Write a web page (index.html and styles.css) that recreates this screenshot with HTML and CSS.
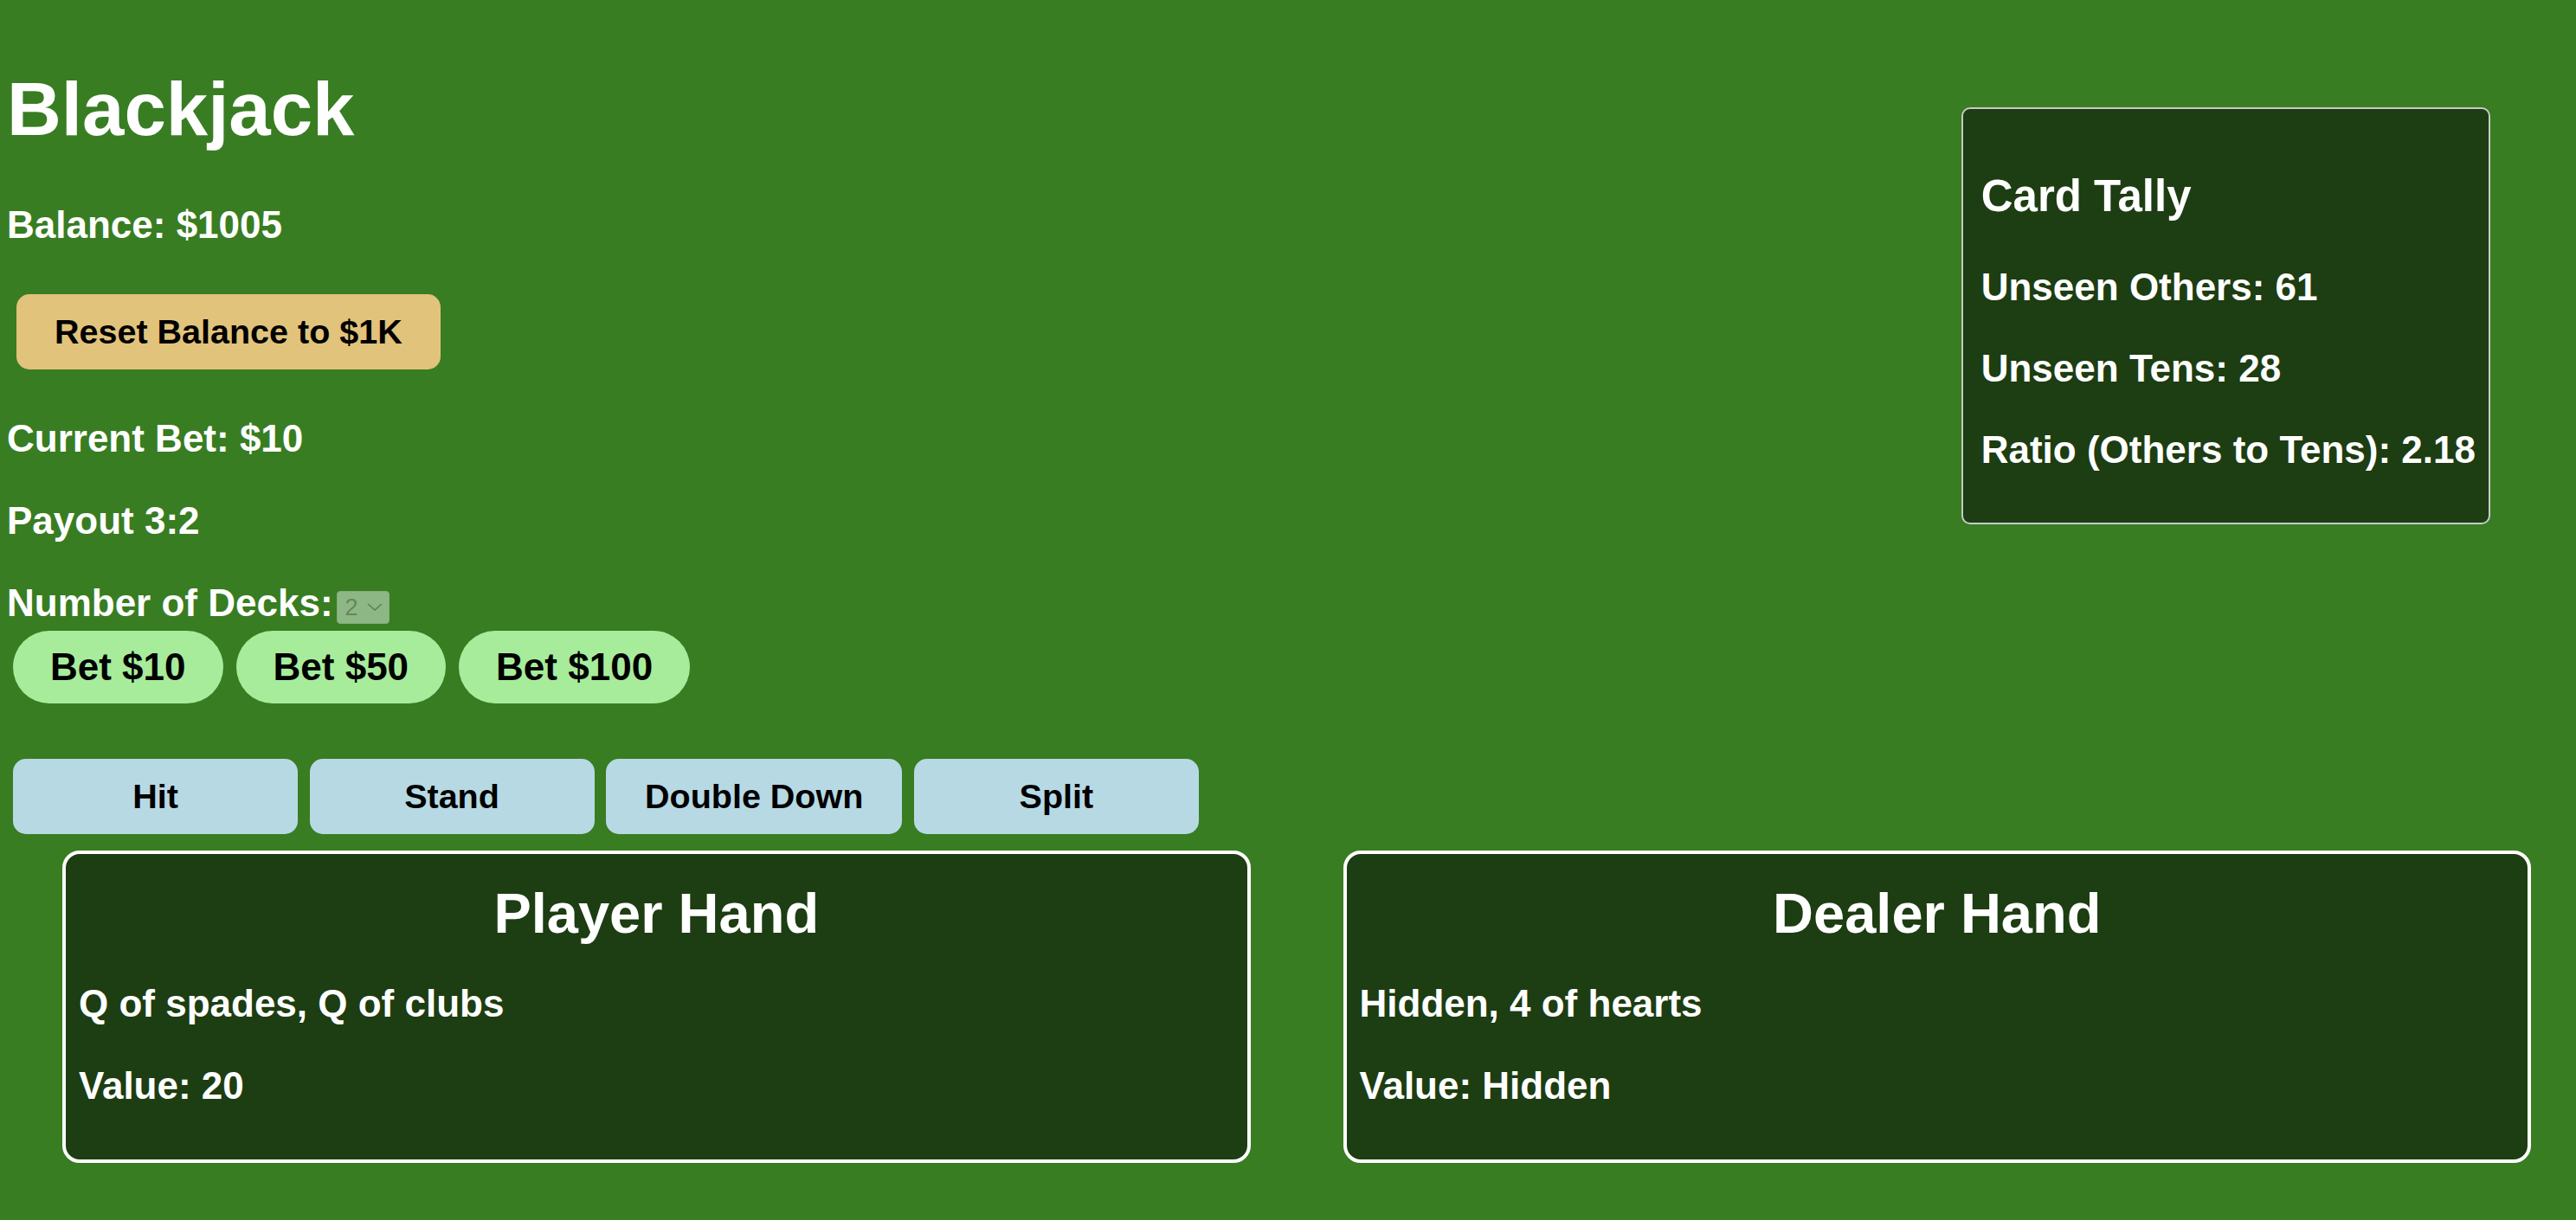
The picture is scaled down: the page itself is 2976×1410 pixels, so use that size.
FILE: index.html
```html
<!DOCTYPE html>
<html lang="en">
<head>
<meta charset="utf-8">
<title>Blackjack</title>
<link rel="stylesheet" href="styles.css">
</head>
<body>
<div class="page">
  <div class="top">
    <div class="controls">
      <h1>Blackjack</h1>
      <p>Balance: $1005</p>
      <div class="reset-row"><button class="btn btn-reset">Reset Balance to $1K</button></div>
      <p>Current Bet: $10</p>
      <p>Payout 3:2</p>
      <div class="decks">
        <label class="decks-label">Number of Decks:</label>
        <span class="select" aria-disabled="true">
          <span class="select-value">2</span>
          <svg class="chev" width="18" height="9" viewBox="0 0 18 9"><polyline points="1,1 9,8 17,1" fill="none" stroke="#5f7f59" stroke-width="1.6"/></svg>
        </span>
      </div>
      <div class="bets">
        <button class="btn btn-bet">Bet $10</button>
        <button class="btn btn-bet">Bet $50</button>
        <button class="btn btn-bet">Bet $100</button>
      </div>
      <div class="actions">
        <button class="btn btn-action">Hit</button>
        <button class="btn btn-action">Stand</button>
        <button class="btn btn-action">Double Down</button>
        <button class="btn btn-action">Split</button>
      </div>
    </div>
    <aside class="tally">
      <h3>Card Tally</h3>
      <p>Unseen Others: 61</p>
      <p>Unseen Tens: 28</p>
      <p>Ratio (Others to Tens): 2.18</p>
    </aside>
  </div>
  <div class="hands">
    <section class="hand">
      <h2>Player Hand</h2>
      <p>Q of spades, Q of clubs</p>
      <p>Value: 20</p>
    </section>
    <section class="hand">
      <h2>Dealer Hand</h2>
      <p>Hidden, 4 of hearts</p>
      <p>Value: Hidden</p>
    </section>
  </div>
</div>
</body>
</html>
```

FILE: styles.css
```css
html, body {
  margin: 0;
  padding: 0;
  background: #387d22;
}

body {
  font-family: "Liberation Sans", Arial, Helvetica, sans-serif;
  font-weight: bold;
  color: #ffffff;
  min-height: 1410px;
}

.page {
  padding: 0 8px;
}

.top {
  display: flex;
  justify-content: space-between;
  align-items: flex-start;
}

.controls {
  display: flow-root;
}

h1 {
  font-size: 87px;
  line-height: normal;
  margin: 76px 0 59px;
  font-weight: bold;
}

p {
  font-size: 44px;
  line-height: normal;
  margin: 45px 0;
  font-weight: bold;
}

.reset-row {
  display: flex;
  padding: 10px 11px;
}

.btn {
  font-family: "Liberation Sans", Arial, Helvetica, sans-serif;
  font-weight: bold;
  color: #000000;
  border: none;
  line-height: normal;
  cursor: pointer;
  box-sizing: border-box;
}

.btn-reset {
  font-size: 39.5px;
  padding: 21px 44px;
  border-radius: 15px;
  background: #e2c37b;
}

.decks {
  display: flex;
  align-items: flex-end;
  font-size: 44px;
  line-height: normal;
}

.select {
  display: flex;
  align-items: center;
  box-sizing: border-box;
  width: 61px;
  height: 38px;
  margin: 0 0 1px 4px;
  padding-left: 9px;
  background: #8db784;
  border: 1px solid #84ad7b;
  border-radius: 4px;
  color: #66865f;
  font-family: "Liberation Sans", Arial, sans-serif;
  font-weight: normal;
  font-size: 27px;
}

.chev {
  margin-left: 10px;
  margin-top: -2px;
}

.bets {
  display: flex;
  gap: 15px;
  padding: 7px;
}

.btn-bet {
  font-size: 44px;
  padding: 17px 43px;
  border-radius: 43px;
  background: #a7ec9b;
}

.actions {
  display: flex;
  gap: 13.5px;
  padding: 7px;
  margin-top: 50px;
}

.btn-action {
  font-size: 39.5px;
  padding: 21px 45px;
  min-width: 329px;
  border-radius: 15px;
  background: #b7d9e4;
}

.tally {
  margin: 124px 91px 0 0;
  padding: 0 15px 15px 21px;
  background: #1d3d12;
  border: 2px solid #c9c9c9;
  border-radius: 10px;
}

.tally h3 {
  font-size: 51px;
  line-height: normal;
  margin: 71px 0 51px;
}

.tally p {
  margin: 44px 0;
}

.hands {
  display: flex;
  gap: 107px;
  padding: 0 44px 0 64px;
  margin-top: 12px;
}

.hand {
  flex: 1;
  background: #1d3d12;
  border: 4px solid #ffffff;
  border-radius: 20px;
  padding: 0 15px 21px;
}

.hand h2 {
  font-size: 65px;
  line-height: normal;
  text-align: center;
  margin: 31px 0 0;
}

.hand p {
  margin: 42px 0 0;
}

.hand p + p {
  margin-top: 45px;
}

.hand p:last-child {
  margin-bottom: 39px;
}
```
